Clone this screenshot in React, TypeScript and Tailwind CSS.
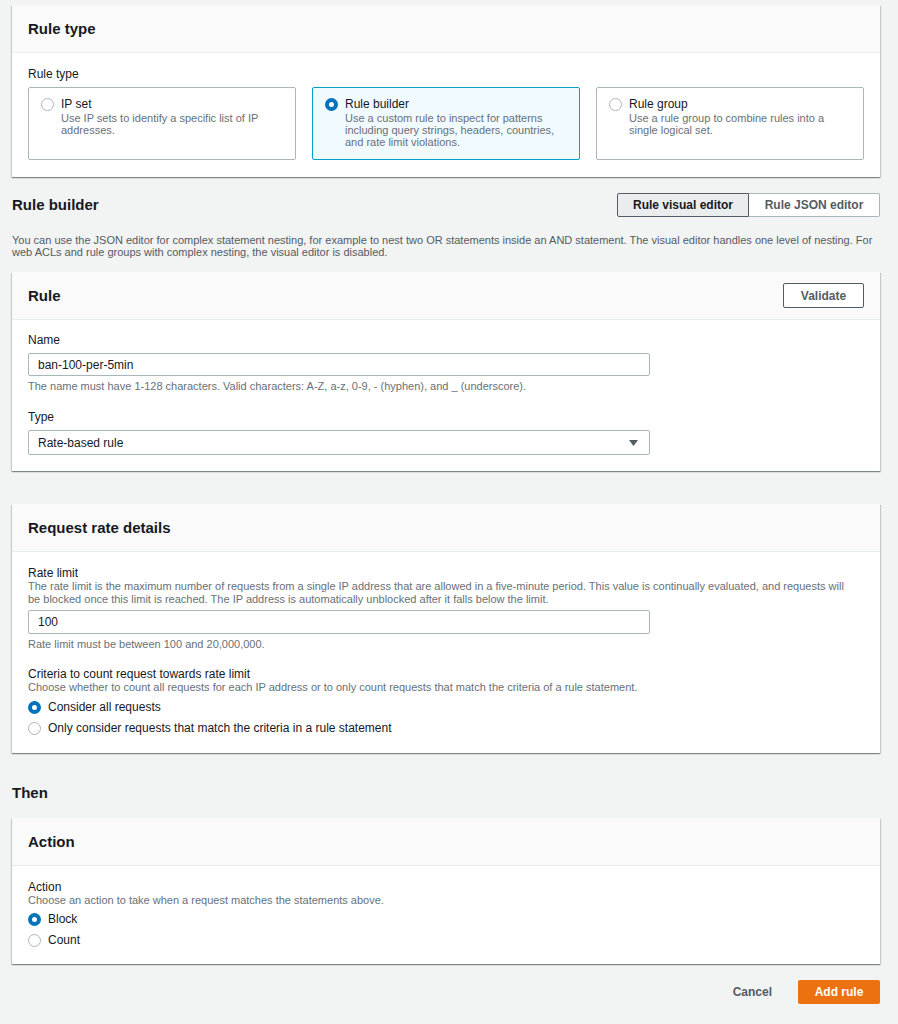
import React from "react";

const font = { fontFamily: '"Liberation Sans", Arial, sans-serif' };

function Radio({ checked }: { checked?: boolean }) {
  return checked ? (
    <span className="box-border inline-block h-[13px] w-[13px] shrink-0 rounded-full border-[4px] border-[#0073bb] bg-white" />
  ) : (
    <span className="box-border inline-block h-[13px] w-[13px] shrink-0 rounded-full border border-[#aab7b8] bg-white" />
  );
}

function Card({ title, right, children }: { title: string; right?: React.ReactNode; children: React.ReactNode }) {
  return (
    <div className="bg-white shadow-[0_1px_1px_0_rgba(0,28,36,0.3),1px_1px_1px_0_rgba(0,28,36,0.15),-1px_1px_1px_0_rgba(0,28,36,0.15)]">
      <div className="flex h-[48px] items-center justify-between border-b border-[#eaeded] bg-[#fafafa] px-[16px]">
        <h2 className="text-[15px] font-bold leading-[20px] text-[#16191f]">{title}</h2>
        {right}
      </div>
      <div className="px-[16px]">{children}</div>
    </div>
  );
}

function Tile({ title, desc, checked }: { title: string; desc: string[]; checked?: boolean }) {
  return (
    <div
      className={`box-border h-[73px] flex-1 rounded-[2px] border px-[12px] pt-[9px] ${
        checked ? "border-[#00a1c9] bg-[#f1faff]" : "border-[#aab7b8] bg-white"
      }`}
    >
      <div className="flex items-start gap-[7px]">
        <div className="flex h-[14px] items-center">
          <Radio checked={checked} />
        </div>
        <div>
          <div className="text-[12px] leading-[14px] text-[#16191f]">{title}</div>
          <div className="mt-[1px] text-[11px] leading-[12px] text-[#687078]">
            {desc.map((d, i) => (
              <div key={i}>{d}</div>
            ))}
          </div>
        </div>
      </div>
    </div>
  );
}

function RadioRow({ label, checked }: { label: string; checked?: boolean }) {
  return (
    <div className="flex h-[20px] items-center gap-[7px]">
      <Radio checked={checked} />
      <span className="text-[12px] leading-[14px] text-[#16191f]">{label}</span>
    </div>
  );
}

export default function App() {
  return (
    <div style={font} className="min-h-[1024px] bg-[#f2f3f3] pb-[20px] pl-[12px] pr-[18px] pt-[5px]">
      {/* Rule type */}
      <Card title="Rule type">
        <div className="pb-[17px] pt-[14px]">
          <div className="mb-[6px] text-[12px] leading-[14px] text-[#16191f]">Rule type</div>
          <div className="flex gap-[16px]">
            <Tile title="IP set" desc={["Use IP sets to identify a specific list of IP", "addresses."]} />
            <Tile
              checked
              title="Rule builder"
              desc={["Use a custom rule to inspect for patterns", "including query strings, headers, countries,", "and rate limit violations."]}
            />
            <Tile title="Rule group" desc={["Use a rule group to combine rules into a", "single logical set."]} />
          </div>
        </div>
      </Card>

      {/* Rule builder header */}
      <div className="mt-[16px] flex h-[24px] items-center justify-between">
        <h2 className="text-[15px] font-bold leading-[20px] text-[#16191f]">Rule builder</h2>
        <div className="flex h-[24px]">
          <div className="box-border flex w-[132px] items-center justify-center rounded-l-[2px] border border-[#545b64] bg-[#eaeded] text-[12px] font-bold text-[#16191f]">
            Rule visual editor
          </div>
          <div className="box-border flex w-[131px] items-center justify-center rounded-r-[2px] border border-l-0 border-[#aab7b8] bg-white text-[12px] font-bold text-[#545b64]">
            Rule JSON editor
          </div>
        </div>
      </div>
      <p className="mt-[17px] text-[11px] leading-[12px] text-[#545b64]">
        You can use the JSON editor for complex statement nesting, for example to nest two OR statements inside an AND statement. The visual editor handles one level of nesting. For web ACLs and rule groups with complex nesting, the visual editor is disabled.
      </p>

      {/* Rule */}
      <div className="mt-[14px]">
        <Card
          title="Rule"
          right={
            <button className="box-border h-[25px] w-[81px] rounded-[2px] border border-[#545b64] bg-white text-[12px] font-bold text-[#545b64]">
              Validate
            </button>
          }
        >
          <div className="pb-[16px] pt-[13px]">
            <div className="mb-[6px] text-[12px] leading-[14px] text-[#16191f]">Name</div>
            <div className="box-border flex h-[23px] w-[622px] items-center rounded-[2px] border border-[#aab7b8] px-[9px] text-[12px] text-[#16191f]">
              ban-100-per-5min
            </div>
            <div className="mt-[4px] text-[11px] leading-[13px] text-[#687078]">
              The name must have 1-128 characters. Valid characters: A-Z, a-z, 0-9, - (hyphen), and _ (underscore).
            </div>
            <div className="mb-[6px] mt-[17px] text-[12px] leading-[14px] text-[#16191f]">Type</div>
            <div className="box-border flex h-[25px] w-[622px] items-center justify-between rounded-[2px] border border-[#aab7b8] pl-[9px] pr-[11px] text-[12px] text-[#16191f]">
              <span>Rate-based rule</span>
              <svg width="9" height="6" viewBox="0 0 9 6">
                <path d="M0 0 H9 L4.5 6 Z" fill="#545b64" />
              </svg>
            </div>
          </div>
        </Card>
      </div>

      {/* Request rate details */}
      <div className="mt-[33px]">
        <Card title="Request rate details">
          <div className="pb-[15px] pt-[14px]">
            <div className="text-[12px] leading-[14px] text-[#16191f]">Rate limit</div>
            <div className="max-w-[828px] text-[11px] leading-[13px] text-[#687078]">
              The rate limit is the maximum number of requests from a single IP address that are allowed in a five-minute period. This value is continually evaluated, and requests will be blocked once this limit is reached. The IP address is automatically unblocked after it falls below the limit.
            </div>
            <div className="mt-[4px] box-border flex h-[24px] w-[622px] items-center rounded-[2px] border border-[#aab7b8] px-[9px] text-[12px] text-[#16191f]">
              100
            </div>
            <div className="mt-[4px] text-[11px] leading-[13px] text-[#687078]">Rate limit must be between 100 and 20,000,000.</div>
            <div className="mt-[16px] text-[12px] leading-[14px] text-[#16191f]">Criteria to count request towards rate limit</div>
            <div className="text-[11px] leading-[13px] text-[#687078]">
              Choose whether to count all requests for each IP address or to only count requests that match the criteria of a rule statement.
            </div>
            <div className="mt-[3px] flex flex-col gap-[1px]">
              <RadioRow checked label="Consider all requests" />
              <RadioRow label="Only consider requests that match the criteria in a rule statement" />
            </div>
          </div>
        </Card>
      </div>

      {/* Then */}
      <h2 className="mt-[30px] text-[15px] font-bold leading-[20px] text-[#16191f]">Then</h2>

      <div className="mt-[15px]">
        <Card title="Action">
          <div className="pb-[14px] pt-[14px]">
            <div className="text-[12px] leading-[14px] text-[#16191f]">Action</div>
            <div className="text-[11px] leading-[13px] text-[#687078]">Choose an action to take when a request matches the statements above.</div>
            <div className="mt-[2px] flex flex-col gap-[1px]">
              <RadioRow checked label="Block" />
              <RadioRow label="Count" />
            </div>
          </div>
        </Card>
      </div>

      {/* Footer buttons */}
      <div className="mt-[16px] flex items-center justify-end gap-[26px]">
        <button className="text-[12px] font-bold text-[#545b64]">Cancel</button>
        <button className="box-border h-[24px] w-[82px] rounded-[2px] bg-[#ec7211] text-[12px] font-bold text-white">Add rule</button>
      </div>
    </div>
  );
}
